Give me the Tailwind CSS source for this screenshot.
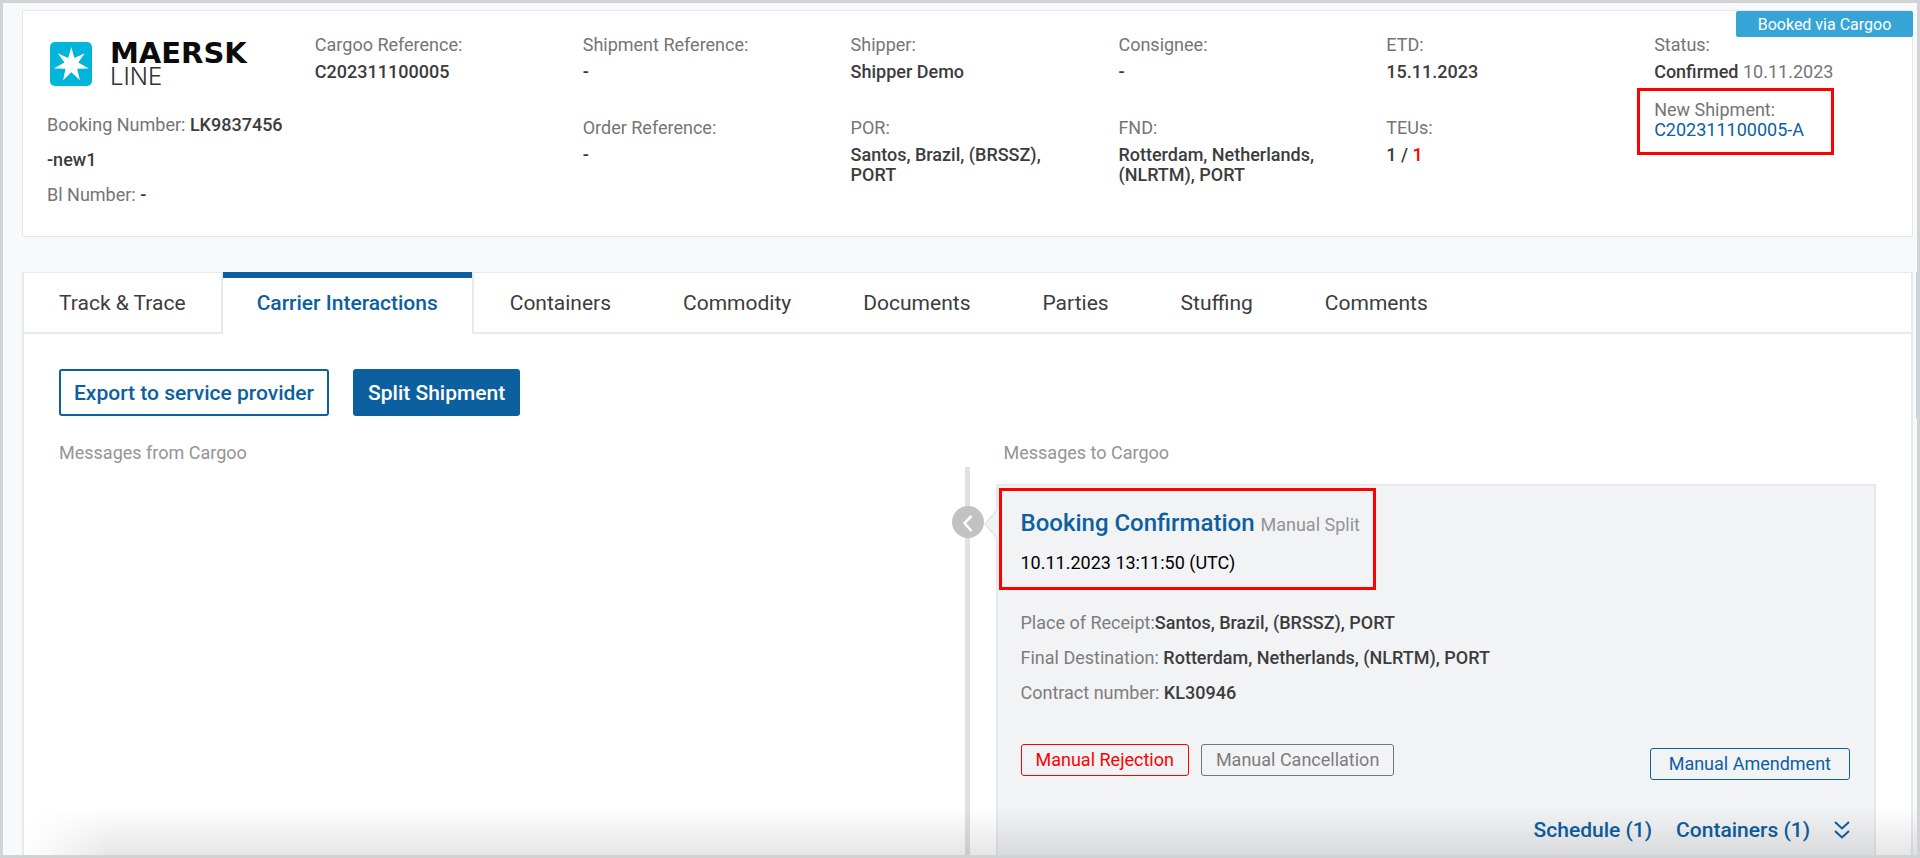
<!DOCTYPE html>
<html lang="en">
  <head>
    <meta charset="UTF-8" />
    <meta name="viewport" content="width=device-width,initial-scale=1" />
    <title>Cargoo - Shipment C202311100005</title>
    <script src="https://cdn.jsdelivr.net/npm/@tailwindcss/browser@4"></script>
  </head>
  <body class="bg-[#f8f9fb] font-[Roboto,sans-serif] text-lg leading-5 text-[#3c3c3c]">
    <div class="relative h-screen overflow-hidden flex flex-col border-3 border-[#d1d3d5] pt-[7px] pl-[19px] pr-1">
      <!-- Shipment summary -->
      <section class="relative shrink-0 grid grid-cols-7 min-h-[227px] bg-white border border-[#e4e7e9] rounded-xs px-[7px] pt-6">
        <span class="absolute top-0 -right-px w-[177px] h-[26px] rounded-xs bg-[#36a5d6] text-white text-base leading-[27px] text-center">Booked via Cargoo</span>

        <div class="pl-[17px]">
          <div class="flex gap-[18px] pt-[7px] pl-[3px]">
            <svg class="w-[42px] h-11" viewBox="0 0 42 44" aria-hidden="true">
              <rect width="42" height="44" rx="5" fill="#00b5db" />
              <path fill="#fff" d="M21.300 5.000 L24.400 15.900 L34.800 11.300 L28.300 20.600 L38.800 26.400 L27.200 26.700 L29.900 38.200 L21.300 30.300 L13.100 38.200 L15.500 26.700 L3.800 26.400 L14.400 20.600 L7.800 11.300 L18.200 15.900 Z" />
            </svg>
            <div class="text-[#0b0b0b]">
              <div class="font-['DejaVu_Sans',sans-serif] text-[29px] leading-[22px] font-bold">MAERSK</div>
              <div class="font-[Inter,sans-serif] text-2xl leading-[26px] font-light text-[#333]">LINE</div>
            </div>
          </div>
          <p class="mt-[17px] leading-[35px] text-[#757575] whitespace-nowrap">
            Booking Number: <span class="font-medium text-[#3c3c3c]">LK9837456<br />-new1</span>
          </p>
          <p class="leading-[35px] text-[#757575]">Bl Number: <span class="font-medium text-[#3c3c3c]">-</span></p>
        </div>

        <dl class="px-[17px]">
          <dt class="text-[#757575]">Cargoo Reference:</dt>
          <dd class="mt-[7px] font-medium">C202311100005</dd>
        </dl>

        <dl class="px-[17px]">
          <dt class="text-[#757575]">Shipment Reference:</dt>
          <dd class="mt-[7px] font-medium">-</dd>
          <dt class="mt-9 text-[#757575]">Order Reference:</dt>
          <dd class="mt-[7px] font-medium">-</dd>
        </dl>

        <dl class="px-[17px]">
          <dt class="text-[#757575]">Shipper:</dt>
          <dd class="mt-[7px] font-medium">Shipper Demo</dd>
          <dt class="mt-9 text-[#757575]">POR:</dt>
          <dd class="mt-[7px] font-medium">Santos, Brazil, (BRSSZ), PORT</dd>
        </dl>

        <dl class="px-[17px]">
          <dt class="text-[#757575]">Consignee:</dt>
          <dd class="mt-[7px] font-medium">-</dd>
          <dt class="mt-9 text-[#757575]">FND:</dt>
          <dd class="mt-[7px] font-medium">Rotterdam, Netherlands, (NLRTM), PORT</dd>
        </dl>

        <dl class="px-[17px]">
          <dt class="text-[#757575]">ETD:</dt>
          <dd class="mt-[7px] font-medium">15.11.2023</dd>
          <dt class="mt-9 text-[#757575]">TEUs:</dt>
          <dd class="mt-[7px] font-medium">1 / <span class="text-[#f00]">1</span></dd>
        </dl>

        <div>
          <dl class="px-[17px]">
            <dt class="text-[#757575]">Status:</dt>
            <dd class="mt-[7px] text-[#757575]"><span class="font-medium text-[#3c3c3c]">Confirmed</span> 10.11.2023</dd>
          </dl>
          <dl class="mt-[6px] w-[197px] h-[67px] border-3 border-[#f00] px-[14px] pt-[9px]">
            <dt class="text-[#757575]">New Shipment:</dt>
            <dd><a href="#" class="text-[#0d60a0]">C202311100005-A</a></dd>
          </dl>
        </div>
      </section>

      <!-- Tabs -->
      <section class="grow mt-[35px] flex flex-col bg-white border-2 border-t border-b-0 border-[#e6e9ed]">
        <nav class="flex shrink-0 h-[61px] text-[21px] leading-[60px] border-b-2 border-[#e6e9ed]">
          <a href="#" class="px-[35px] border-r-2 border-[#e6e9ed]">Track &amp; Trace</a>
          <a href="#" class="-mt-px h-[62px] px-[34px] border-t-6 border-[#0d60a0] bg-white font-medium text-[#0d60a0] leading-[50px]">Carrier Interactions</a>
          <a href="#" class="px-9 border-l-2 border-[#e6e9ed]">Containers</a>
          <a href="#" class="px-9">Commodity</a>
          <a href="#" class="px-9">Documents</a>
          <a href="#" class="px-9">Parties</a>
          <a href="#" class="px-9">Stuffing</a>
          <a href="#" class="px-9">Comments</a>
        </nav>

        <div class="flex shrink-0 gap-6 pt-[35px] px-[35px] text-[21px] font-medium">
          <button type="button" class="h-[47px] px-[13px] border-2 border-[#0d60a0] rounded-[3px] text-[#0d60a0]">Export to service provider</button>
          <button type="button" class="h-[47px] px-[13px] border-2 border-[#0d60a0] rounded-[3px] bg-[#0d60a0] text-white">Split Shipment</button>
        </div>

        <!-- Messages -->
        <div class="grow grid grid-cols-2 pt-[27px] px-[35px]">
          <h2 class="text-[#949494]">Messages from Cargoo</h2>
          <div class="relative flex flex-col">
            <h2 class="pl-9 text-[#949494]">Messages to Cargoo</h2>
            <span class="absolute -left-[3px] top-6 bottom-0 w-[5px] bg-[#e0e1e1]"></span>
            <svg class="absolute z-10 -left-4 top-[63px] w-8 h-8" viewBox="0 0 32 32" aria-hidden="true">
              <circle cx="16" cy="16" r="16" fill="#c2c2c2" />
              <path d="M19.500 10 L12.500 17 L19.500 25" fill="none" stroke="#fff" stroke-width="2.500" />
            </svg>

            <article class="relative grow mt-[21px] ml-7 flex flex-col bg-[#f2f3f5] border-2 border-b-0 border-[#e6e8ea] pt-[2px]">
              <svg class="absolute -left-[14px] top-[22px] w-[14px] h-8" viewBox="0 0 14 32" aria-hidden="true">
                <path d="M14 1 L1 16 L14 31" fill="#f2f3f5" stroke="#e6e8ea" stroke-width="2" />
              </svg>
              <header class="ml-px w-[377px] h-[102px] border-3 border-[#f00] pl-[19px] pt-4 whitespace-nowrap">
                <h3 class="text-2xl leading-8 font-medium text-[#0d60a0]">Booking Confirmation <small class="text-lg leading-5 font-normal text-[#949494]">Manual Split</small></h3>
                <time class="block mt-[14px] text-black">10.11.2023 13:11:50 (UTC)</time>
              </header>
              <div class="pl-[23px] mt-[15px] leading-[35px] text-[#7d7d7d]">
                <p>Place of Receipt:<b class="font-medium text-[#3c3c3c]">Santos, Brazil, (BRSSZ), PORT</b></p>
                <p>Final Destination: <b class="font-medium text-[#3c3c3c]">Rotterdam, Netherlands, (NLRTM), PORT</b></p>
                <p>Contract number: <b class="font-medium text-[#3c3c3c]">KL30946</b></p>
              </div>
              <div class="flex gap-3 pl-[23px] pr-6 mt-[34px]">
                <button type="button" class="h-8 px-[14px] border border-[#f00] rounded-[3px] text-[#f00]">Manual Rejection</button>
                <button type="button" class="h-8 px-[14px] border border-[#757575] rounded-[3px] text-[#7d7d7d]">Manual Cancellation</button>
                <button type="button" class="ml-auto mt-1 h-8 px-[18px] border border-[#0d60a0] rounded-[3px] text-[#0d60a0]">Manual Amendment</button>
              </div>
              <div class="flex items-center justify-end gap-6 pr-6 mt-10 text-[21px] leading-5 font-medium text-[#0d60a0]">
                <a href="#">Schedule (1)</a>
                <a href="#">Containers (1)</a>
                <button type="button" aria-label="Show details">
                  <svg class="w-4 h-5" viewBox="0 0 16 20" fill="none" stroke="#0d60a0" stroke-width="2" aria-hidden="true">
                    <path d="M1 2 L8 8.500 L15 2 M1 11 L8 17.500 L15 11" />
                  </svg>
                </button>
              </div>
            </article>
          </div>
        </div>
      </section>

      <!-- Scrollbar thumb -->
      <span class="absolute right-0 top-[269px] w-px h-[147px] bg-[#c4d7e8]"></span>

      <!-- Fade at the bottom edge -->
      <div class="pointer-events-none absolute z-20 left-[21px] right-0 bottom-0 h-12 bg-linear-to-t from-black/10 to-transparent [mask-image:linear-gradient(to_right,transparent,black_90px)]"></div>
    </div>
  </body>
</html>
